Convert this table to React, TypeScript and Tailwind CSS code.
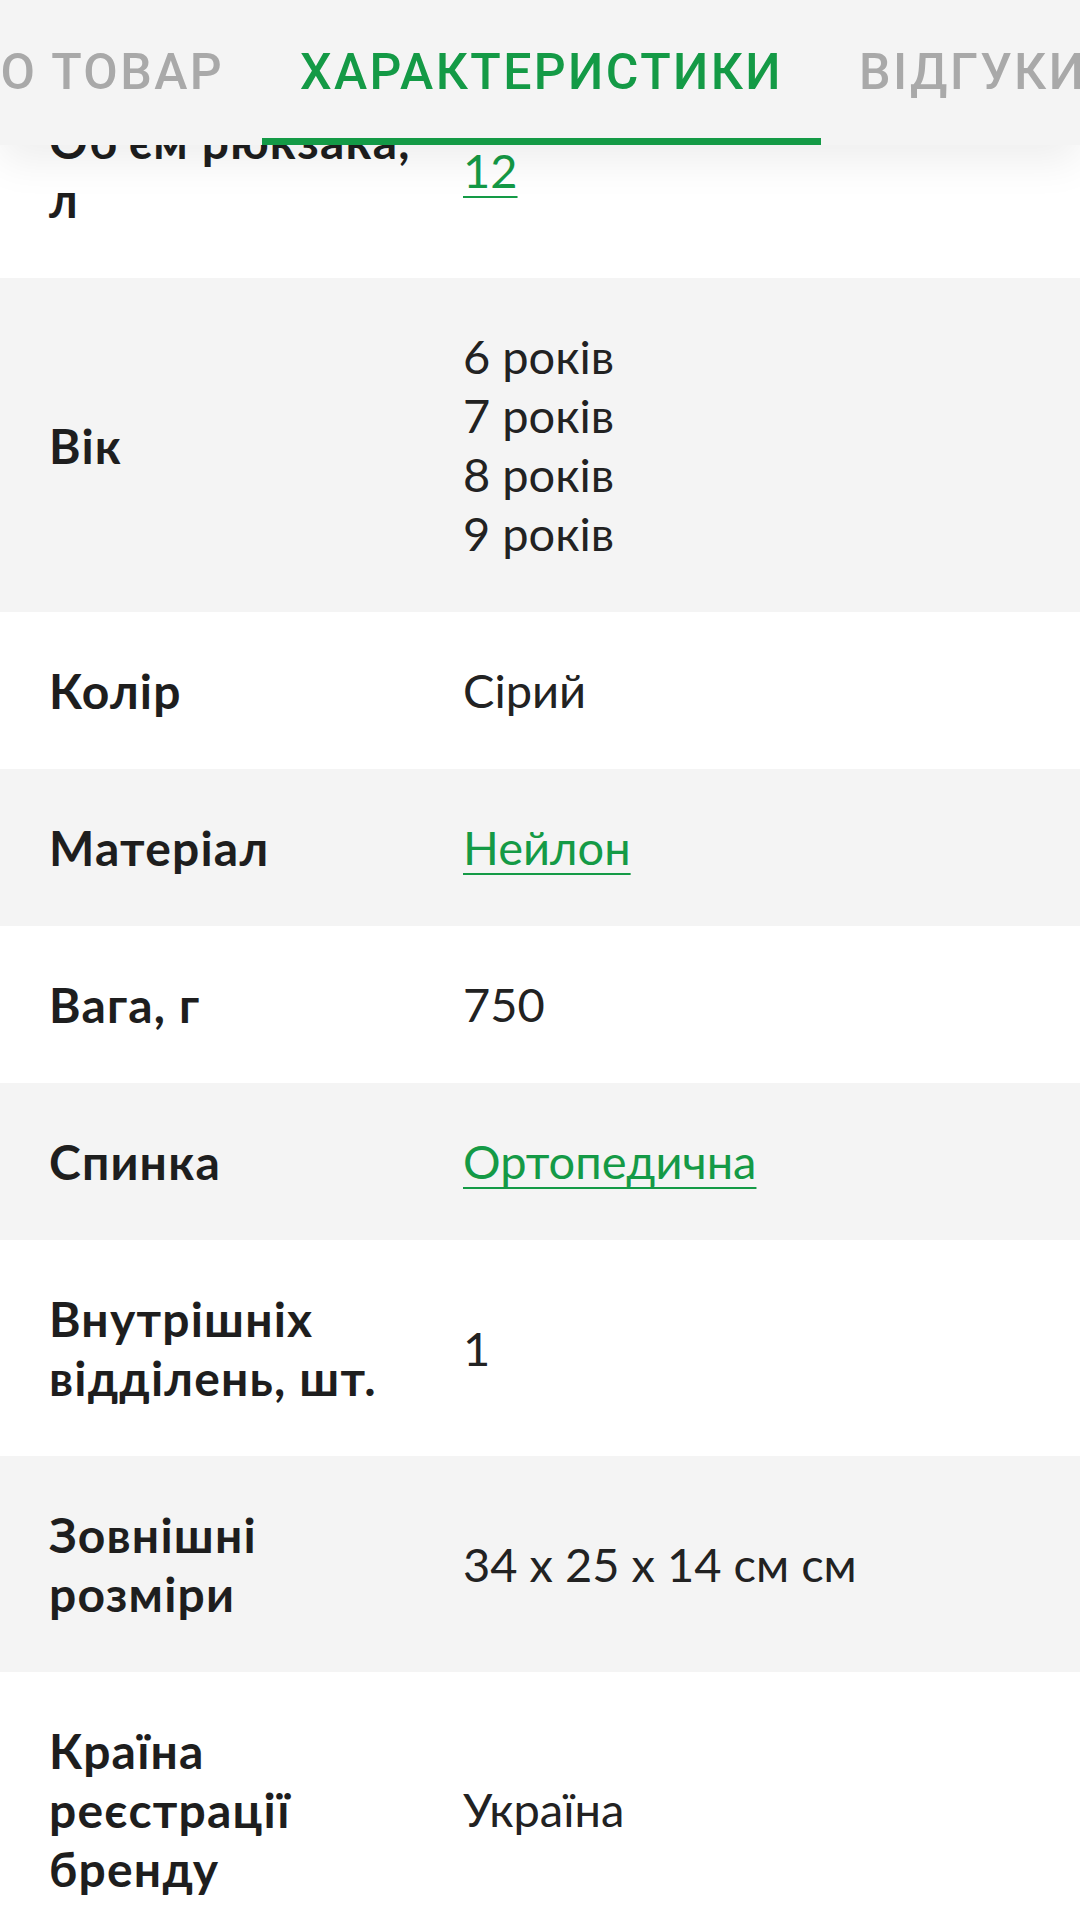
import React from "react";

type Row = { label: string[]; value: string[]; link?: boolean };

const rows: Row[] = [
  { label: ["Об'єм рюкзака,", "л"], value: ["12"], link: true },
  { label: ["Вік"], value: ["6 років", "7 років", "8 років", "9 років"] },
  { label: ["Колір"], value: ["Сірий"] },
  { label: ["Матеріал"], value: ["Нейлон"], link: true },
  { label: ["Вага, г"], value: ["750"] },
  { label: ["Спинка"], value: ["Ортопедична"], link: true },
  { label: ["Внутрішніх", "відділень, шт."], value: ["1"] },
  { label: ["Зовнішні", "розміри"], value: ["34 x 25 x 14 см см"] },
  { label: ["Країна", "реєстрації", "бренду"], value: ["Україна"] },
];

export default function App() {
  return (
    <div className="relative w-[1080px] h-[1918px] overflow-hidden bg-white">
      <div className="absolute top-0 left-0 right-0 z-10 h-[145px] bg-[#f4f4f4] shadow-[0_16px_40px_rgba(0,0,0,0.07)] overflow-hidden">
        <div
          className="flex h-full items-stretch whitespace-nowrap text-[50px] font-medium tracking-[2.4px]"
          style={{ fontFamily: "Roboto, 'Liberation Sans', sans-serif" }}
        >
          <div className="flex w-[262px] shrink-0 items-center justify-end overflow-hidden pr-[38px] text-[#a9a9a9]">
            <span className="shrink-0">ПРО ТОВАР</span>
          </div>
          <div className="relative flex shrink-0 items-center px-[38px] text-[#149a46]">
            ХАРАКТЕРИСТИКИ
            <div className="absolute left-0 right-0 bottom-0 h-[7px] bg-[#149a46]" />
          </div>
          <div className="flex shrink-0 items-center px-[38px] text-[#a9a9a9]">ВІДГУКИ</div>
        </div>
      </div>
      <div className="mt-[62px]" style={{ fontFamily: "Lato, 'Noto Sans', sans-serif" }}>
        {rows.map((r, i) => (
          <div
            key={i}
            className={`flex items-center py-[49px] pl-[49px] ${i % 2 === 1 ? "bg-[#f4f4f4]" : "bg-white"}`}
          >
            <div className="w-[414px] shrink-0 text-[48px] leading-[59px] font-bold tracking-[1.2px] text-[#1e1e1e]">
              {r.label.map((l, j) => (
                <div key={j}>{l}</div>
              ))}
            </div>
            <div className="text-[47px] leading-[59px] text-[#222]">
              {r.value.map((v, j) => (
                <div key={j}>
                  {r.link ? (
                    <span className="text-[#149a46] underline decoration-[2px] underline-offset-[8px]">{v}</span>
                  ) : (
                    v
                  )}
                </div>
              ))}
            </div>
          </div>
        ))}
      </div>
    </div>
  );
}
